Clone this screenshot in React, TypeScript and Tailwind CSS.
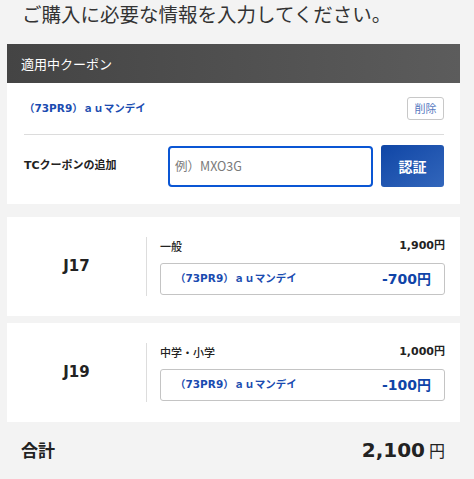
import React from "react";

const font = { fontFamily: '"DejaVu Sans", "Noto Sans CJK JP", sans-serif' };
const jp = { fontFamily: '"Noto Sans CJK JP", sans-serif' };

function Ticket({ seat, kind, price, discount }: { seat: string; kind: string; price: string; discount: string }) {
  return (
    <div className="ml-[7px] mr-[14px] bg-white flex py-[20px]">
      <div className="w-[139px] flex items-center justify-center text-[15px] font-bold text-[#222]">{seat}</div>
      <div className="w-px bg-[#dddddd]" />
      <div className="flex-1 pl-[13px] pr-[15px] pb-[1px]">
        <div className="flex justify-between items-center h-[18px] text-[11px] font-bold text-[#222]">
          <span style={jp} className="font-medium">{kind}</span>
          <span>{price}</span>
        </div>
        <div className="mt-[8px] h-[32px] border border-[#c4c4c4] rounded-[3px] flex items-center justify-between pl-[14px] pr-[13px]">
          <span className="text-[10.5px] font-bold text-[#1a4bb0]">（73PR9）ａｕマンデイ</span>
          <span className="text-[14px] font-bold text-[#0f44a8]">{discount}</span>
        </div>
      </div>
    </div>
  );
}

export default function App() {
  return (
    <div className="w-[474px] h-[479px] bg-[#f3f3f3] overflow-hidden" style={font}>
      <div style={jp} className="h-[44px] pl-[22px] text-[19.5px] leading-[28px] text-[#333]">
        ご購入に必要な情報を入力してください。
      </div>
      <div className="ml-[7px] mr-[14px] h-[39px] bg-gradient-to-r from-[#444444] to-[#5c5c5c] flex items-center pl-[14px]">
        <span style={jp} className="text-white text-[13px]">適用中クーポン</span>
      </div>
      <div className="ml-[7px] mr-[14px] bg-white pr-[16px] pl-[17px] pb-[17px]">
        <div className="h-[52px] flex items-center justify-between border-b border-[#dcdcdc]">
          <span className="text-[10.5px] font-bold text-[#1a4bb0]">（73PR9）ａｕマンデイ</span>
          <span style={jp} className="w-[37px] h-[23px] border border-[#c8c8c8] rounded-[3px] flex items-center justify-center text-[11px] text-[#5578c0]">削除</span>
        </div>
        <div className="flex items-center mt-[10px]">
          <div className="w-[144px] text-[11px] font-bold text-[#222]">TCクーポンの追加</div>
          <div style={jp} className="w-[205px] h-[41px] border-2 border-[#0a56d4] rounded-[4px] flex items-center pl-[5px] text-[12.5px] text-[#7a7a7a]">
            例）MXO3G
          </div>
          <div className="ml-[8px] w-[63px] h-[42px] rounded-[3px] bg-gradient-to-br from-[#0f46a6] to-[#3266bb] flex items-center justify-center text-white text-[14px] font-bold" style={jp}>
            認証
          </div>
        </div>
      </div>
      <div className="h-[13px]" />
      <Ticket seat="J17" kind="一般" price="1,900円" discount="-700円" />
      <div className="h-[7px]" />
      <Ticket seat="J19" kind="中学・小学" price="1,000円" discount="-100円" />
      <div className="flex items-center justify-between pl-[21px] pr-[29px] h-[56px]">
        <span style={jp} className="text-[17px] font-bold text-[#222]">合計</span>
        <span className="text-[#222] flex items-baseline">
          <span className="text-[20px] font-bold">2,100</span>
          <span style={jp} className="text-[16px] ml-[4px]">円</span>
        </span>
      </div>
    </div>
  );
}
